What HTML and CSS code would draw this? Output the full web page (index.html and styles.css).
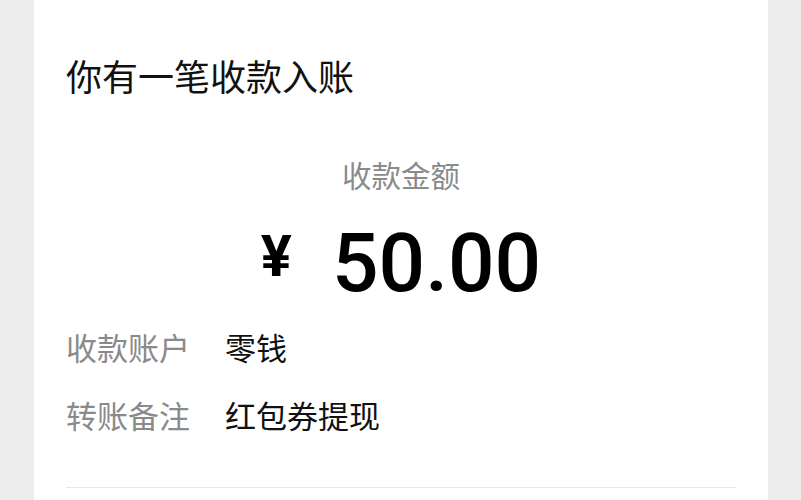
FILE: index.html
```html
<!DOCTYPE html>
<html lang="zh-CN">
<head>
    <meta charset="UTF-8">
    <meta name="viewport" content="width=device-width, initial-scale=1.0">
    <title>收款入账</title>
    <link rel="stylesheet" href="styles.css">
</head>
<body>
    <div class="card">
        <p class="title">你有一笔收款入账</p>
        <p class="sub">收款金额</p>
        <div class="amount">
            <span class="yen">¥</span>
            <span class="num">50.00</span>
        </div>
        <div class="row">
            <span class="label">收款账户</span>
            <span class="value">零钱</span>
        </div>
        <div class="row second">
            <span class="label">转账备注</span>
            <span class="value">红包券提现</span>
        </div>
        <div class="divider"></div>
    </div>
</body>
</html>
```

FILE: styles.css
```css
body { margin: 0; padding: 0; background-color: #ececec; font-family: "Noto Sans", "Noto Sans CJK SC", sans-serif; height: 500px; overflow: hidden; }
.card { background: #fff; margin: 0 33px 0 34px; padding: 54px 32px 0 32px; height: 500px; box-sizing: border-box; }
.title { margin: 0; font-size: 36px; line-height: 48px; color: #111; }
.sub { margin: 54px 0 0; font-size: 29.5px; line-height: 40px; color: #8a8a8a; text-align: center; }
.amount { display: flex; justify-content: center; align-items: center; margin-top: 25px; height: 84px; color: #000; font-family: Roboto, "Noto Sans", sans-serif; }
.yen { font-size: 58px; line-height: 1; font-weight: 700; margin-bottom: 14px; margin-right: 40px; }
.num { font-size: 82px; line-height: 1; font-weight: 500; }
.row { display: flex; margin-top: 23px; font-size: 31px; line-height: 40px; }
.row.second { margin-top: 28px; }
.label { width: 159px; color: #8a8a8a; }
.value { color: #111; }
.divider { margin-top: 51px; height: 1px; background: #e8e8e8; }
```
